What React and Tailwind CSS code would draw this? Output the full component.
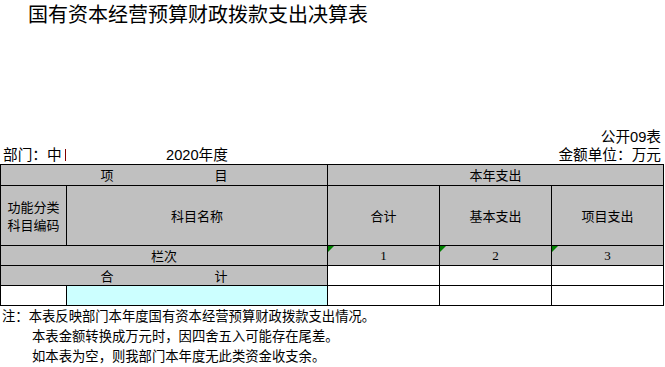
import React from "react";

const cjk = { fontFamily: '"Noto Sans CJK SC", "Noto Sans", sans-serif' };
const latin = { fontFamily: '"Liberation Sans", "Noto Sans CJK SC", sans-serif' };
const serif = { fontFamily: '"Liberation Serif", "Noto Sans CJK SC", serif' };

function Tri() {
  return (
    <span className="absolute left-0 top-0 w-0 h-0 border-t-[6px] border-t-[#008000] border-r-[6px] border-r-transparent" />
  );
}

export default function App() {
  const cell = "border-r border-b border-black flex items-center justify-center";
  return (
    <div className="w-[665px] h-[367px] bg-white text-black overflow-hidden" style={cjk}>
      <div className="pl-[28px] pt-[1px] h-[128px] text-[20px] leading-[26px]">
        国有资本经营预算财政拨款支出决算表
      </div>
      <div className="h-[18px] flex justify-end pr-[4px] text-[14.67px] leading-[18px]" style={latin}>
        公开09表
      </div>
      <div className="h-[18px] flex items-center text-[14.67px] leading-[18px]" style={latin}>
        <div className="w-[166px] pl-[3px] flex items-center">
          部门：中
          <span className="inline-block w-px h-[12px] bg-[#800000] ml-[3px]" />
        </div>
        <div>2020年度</div>
        <div className="ml-auto pr-[4px]">金额单位：万元</div>
      </div>
      <div
        className="grid border-l border-t border-black w-[664px] text-[13px]"
        style={{
          gridTemplateColumns: "66px 261px 112px 112px 112px",
          gridTemplateRows: "21px 60px 20px 20px 20px",
        }}
      >
        <div className={`${cell} col-span-2 bg-[#c0c0c0] gap-[101px]`}>
          <span>项</span>
          <span>目</span>
        </div>
        <div className={`${cell} col-span-3 bg-[#c0c0c0]`}>本年支出</div>

        <div className={`${cell} bg-[#c0c0c0] flex-col leading-[18px]`}>
          <span>功能分类</span>
          <span>科目编码</span>
        </div>
        <div className={`${cell} bg-[#c0c0c0]`}>科目名称</div>
        <div className={`${cell} bg-[#c0c0c0]`}>合计</div>
        <div className={`${cell} bg-[#c0c0c0]`}>基本支出</div>
        <div className={`${cell} bg-[#c0c0c0]`}>项目支出</div>

        <div className={`${cell} col-span-2 bg-[#c0c0c0]`}>栏次</div>
        <div className={`${cell} bg-[#c0c0c0] relative`} style={serif}>
          <Tri />1
        </div>
        <div className={`${cell} bg-[#c0c0c0] relative`} style={serif}>
          <Tri />2
        </div>
        <div className={`${cell} bg-[#c0c0c0] relative`} style={serif}>
          <Tri />3
        </div>

        <div className={`${cell} col-span-2 bg-[#c0c0c0] gap-[101px]`}>
          <span>合</span>
          <span>计</span>
        </div>
        <div className={`${cell} bg-white`} />
        <div className={`${cell} bg-white`} />
        <div className={`${cell} bg-white`} />

        <div className={`${cell} bg-white`} />
        <div className={`${cell} bg-[#ccffff]`} />
        <div className={`${cell} bg-white`} />
        <div className={`${cell} bg-white`} />
        <div className={`${cell} bg-white`} />
      </div>
      <div className="text-[13.33px] leading-[20px] pl-[2px]">
        <div>注：本表反映部门本年度国有资本经营预算财政拨款支出情况。</div>
        <div className="pl-[30px]">本表金额转换成万元时，因四舍五入可能存在尾差。</div>
        <div className="pl-[30px]">如本表为空，则我部门本年度无此类资金收支余。</div>
      </div>
    </div>
  );
}
